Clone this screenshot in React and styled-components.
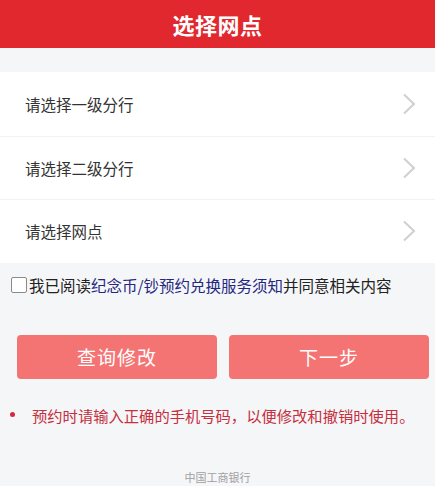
import React from "react";
import styled, { createGlobalStyle } from "styled-components";

const Global = createGlobalStyle`
  html, body { margin: 0; padding: 0; background: #f5f6f8; }
  body { font-family: "Noto Sans CJK SC", "Noto Sans", sans-serif; }
  * { box-sizing: border-box; }
`;

const Page = styled.div`
  width: 435px;
  height: 486px;
  background: #f5f6f8;
  display: flex;
  flex-direction: column;
  overflow: hidden;
`;

const Header = styled.div`
  height: 48px;
  background: #e1282f;
  color: #fff;
  display: flex;
  align-items: center;
  justify-content: center;
  font-size: 22px;
  font-weight: 700;
  letter-spacing: 0.5px;
`;

const List = styled.div`
  margin-top: 24px;
  background: #fff;
  display: flex;
  flex-direction: column;
`;

const Row = styled.div`
  height: 63.5px;
  display: flex;
  align-items: center;
  justify-content: space-between;
  padding: 0 19px 0 25px;
  font-size: 15.5px;
  color: #333;
  border-top: ${(p) => (p.$first ? "none" : "1px solid #f1f2f4")};
`;

const Chevron = () => (
  <svg width="14" height="22" viewBox="0 0 14 22">
    <path d="M2 1.5 L12 11 L2 20.5" fill="none" stroke="#cfcfcf" strokeWidth="2" />
  </svg>
);

const Agree = styled.label`
  margin-top: 13px;
  display: flex;
  align-items: center;
  padding-left: 11px;
  font-size: 15.5px;
  color: #222;
  height: 18px;
`;

const Box = styled.span`
  width: 16px;
  height: 16px;
  border: 1px solid #8a8a8a;
  border-radius: 2px;
  background: #fff;
  margin-right: 2px;
  flex: none;
`;

const Link = styled.span`
  color: #25287f;
`;

const Buttons = styled.div`
  margin-top: 41px;
  display: grid;
  grid-template-columns: 200px 200px;
  column-gap: 12px;
  padding-left: 17px;
`;

const Button = styled.div`
  height: 44px;
  border-radius: 4px;
  background: #f47474;
  color: #fff;
  font-size: 19px;
  display: flex;
  align-items: center;
  justify-content: center;
  letter-spacing: 1px;
`;

const Note = styled.div`
  margin-top: 25px;
  display: flex;
  align-items: center;
  font-size: 15.3px;
  color: #c52f3e;
  padding-left: 10px;
`;

const Dot = styled.span`
  width: 5px;
  height: 5px;
  border-radius: 50%;
  background: #d8283a;
  margin-right: 17px;
  flex: none;
`;

const Footer = styled.div`
  margin-top: auto;
  margin-bottom: 1px;
  text-align: center;
  font-size: 11px;
  color: #a0a0a0;
`;

export default function App() {
  return (
    <>
      <Global />
      <Page>
        <Header>选择网点</Header>
        <List>
          <Row $first>
            <span>请选择一级分行</span>
            <Chevron />
          </Row>
          <Row>
            <span>请选择二级分行</span>
            <Chevron />
          </Row>
          <Row>
            <span>请选择网点</span>
            <Chevron />
          </Row>
        </List>
        <Agree>
          <Box />
          我已阅读<Link>纪念币/钞预约兑换服务须知</Link>并同意相关内容
        </Agree>
        <Buttons>
          <Button>查询修改</Button>
          <Button>下一步</Button>
        </Buttons>
        <Note>
          <Dot />
          预约时请输入正确的手机号码，以便修改和撤销时使用。
        </Note>
        <Footer>中国工商银行</Footer>
      </Page>
    </>
  );
}
